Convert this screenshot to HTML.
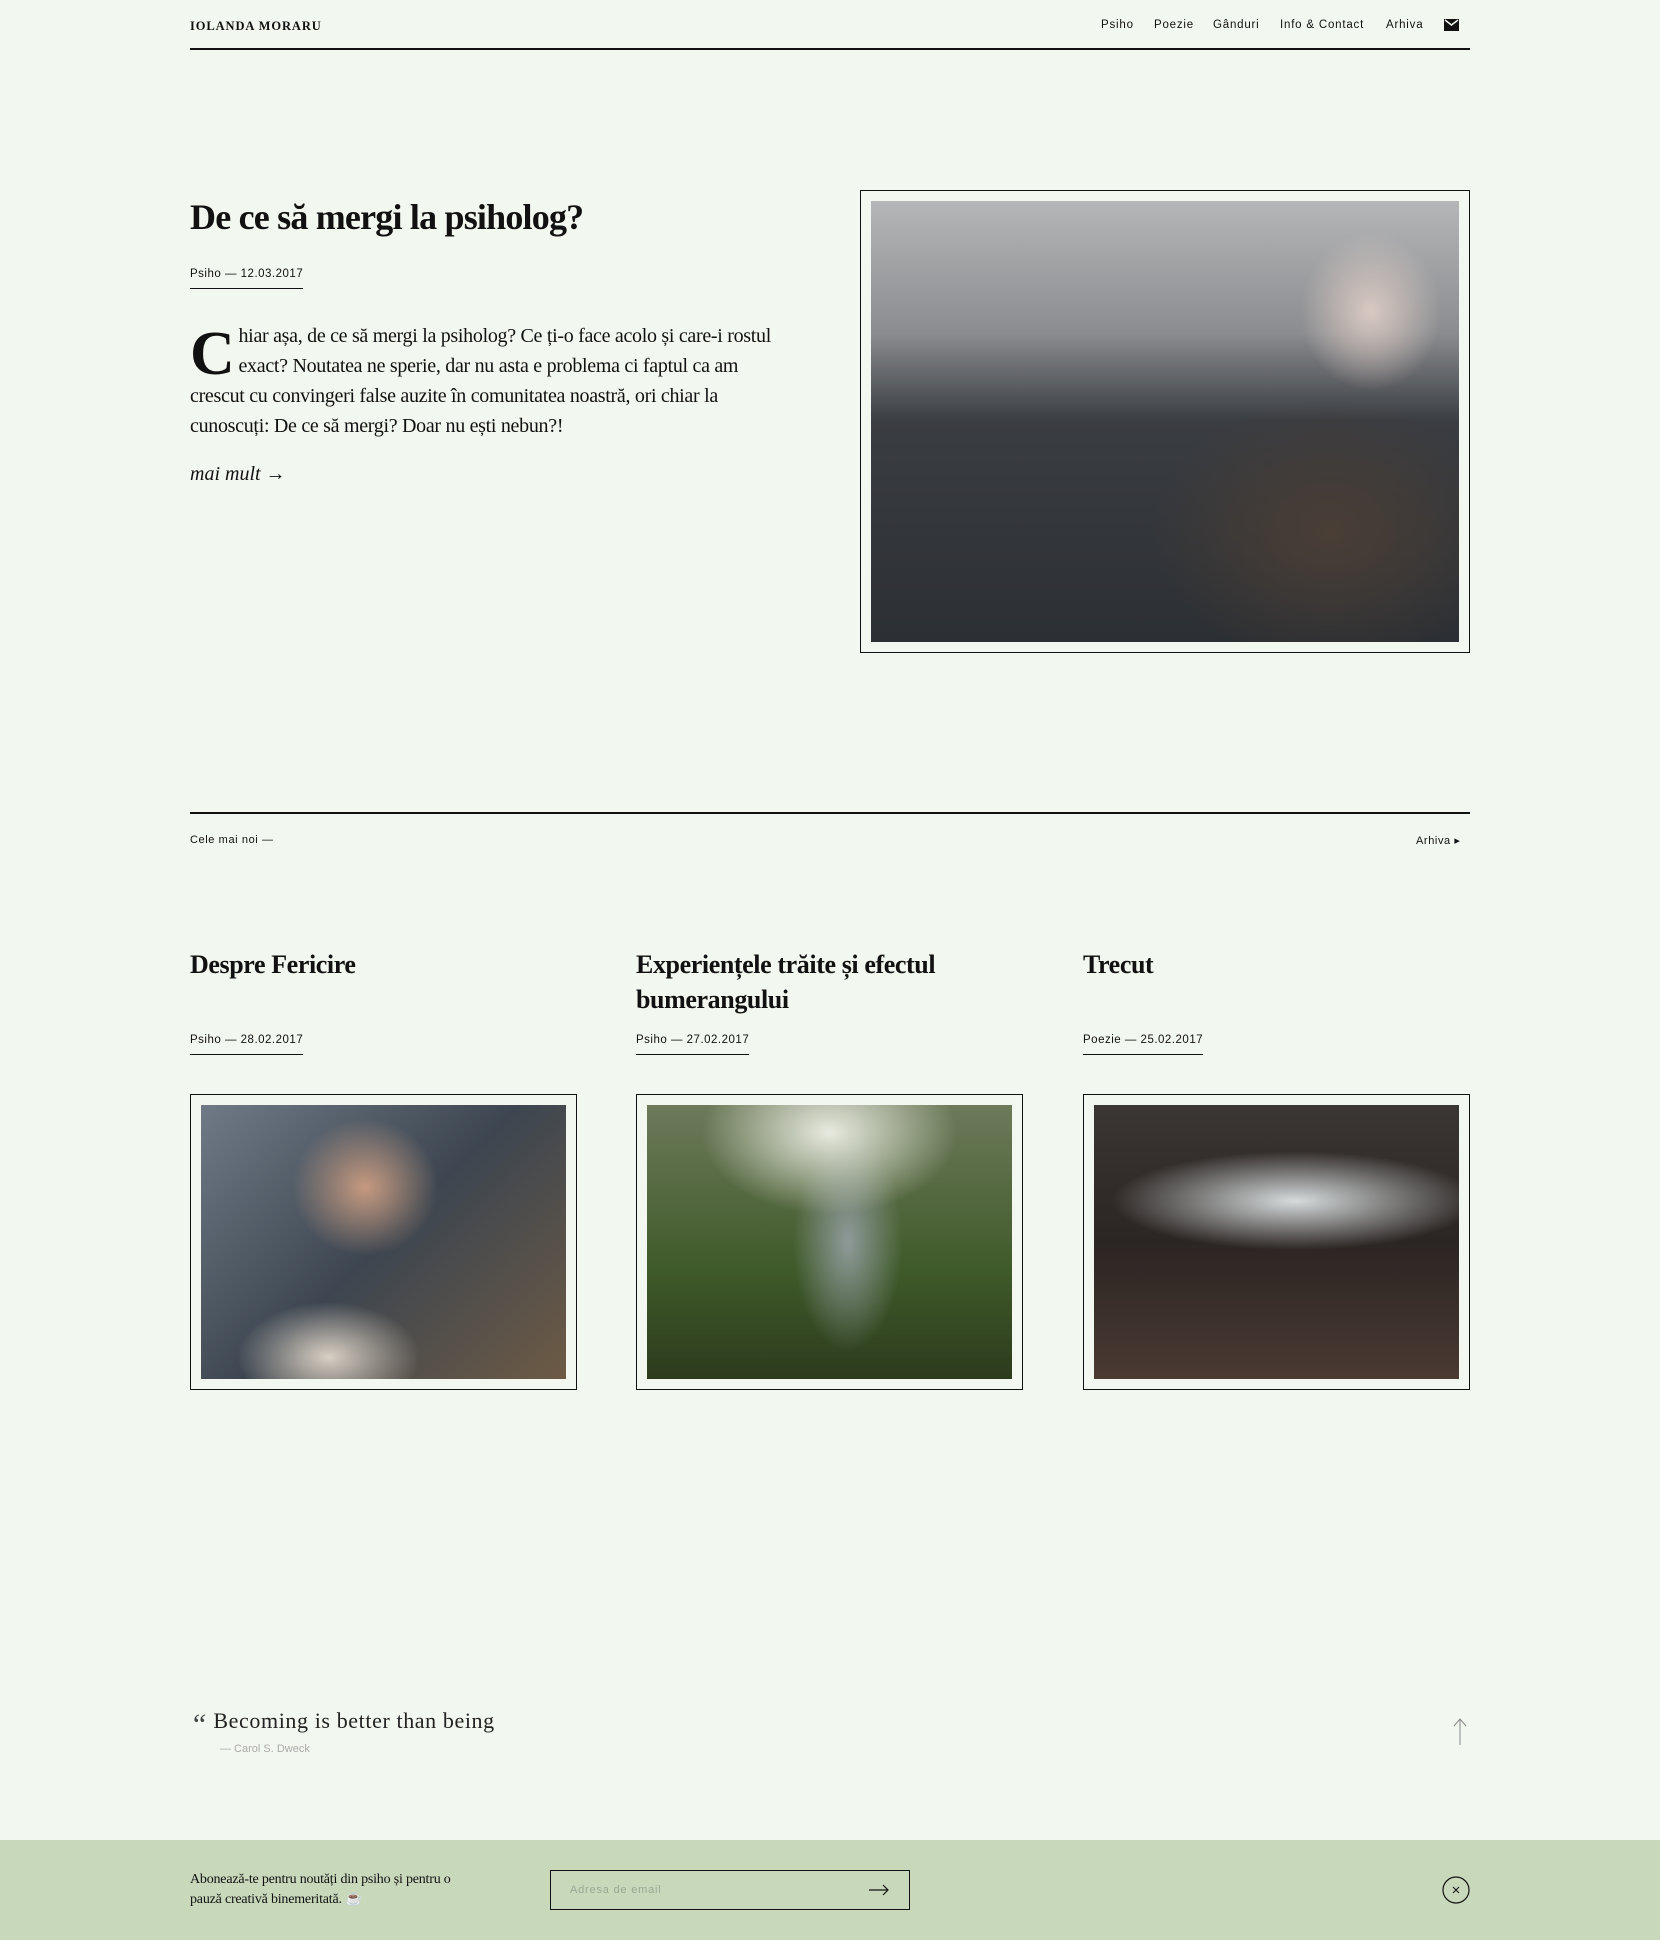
<!DOCTYPE html>
<html><head><meta charset="utf-8"><style>
*{margin:0;padding:0;box-sizing:border-box}
body{width:1660px;height:1940px;background:#f2f7ef;font-family:"Liberation Serif",serif;color:#111;position:relative;overflow:hidden}
.abs{position:absolute}
.sans{font-family:"Liberation Sans",sans-serif}
.nav{top:19px;font-size:11.5px;letter-spacing:.8px}
.meta{font-family:"Liberation Sans",sans-serif;font-size:11.5px;letter-spacing:.5px;padding-bottom:8px;border-bottom:1.5px solid #111;white-space:nowrap}
.frame{border:1.5px solid #111;padding:12px}
.frame div{width:100%;height:100%}
.ct{font-size:26px;font-weight:bold;line-height:35px;letter-spacing:-.4px}
</style></head><body>
<div class="abs" style="left:190px;top:19px;font-size:12.5px;font-weight:bold;letter-spacing:.9px">IOLANDA MORARU</div>
<div class="abs sans nav" style="left:1101px">Psiho</div>
<div class="abs sans nav" style="left:1154px">Poezie</div>
<div class="abs sans nav" style="left:1213px">Gânduri</div>
<div class="abs sans nav" style="left:1280px">Info &amp; Contact</div>
<div class="abs sans nav" style="left:1386px">Arhiva</div>
<svg class="abs" style="left:1444px;top:19px" width="15" height="12" viewBox="0 0 15 12"><rect x="0" y="0" width="15" height="12" fill="#111"/><path d="M1 1 L7.5 6 L14 1" stroke="#f2f7ef" stroke-width="1.5" fill="none"/></svg>
<div class="abs" style="left:190px;top:48px;width:1280px;height:1.5px;background:#111"></div>

<div class="abs" style="left:190px;top:196px;font-size:36px;font-weight:bold;letter-spacing:-.8px">De ce să mergi la psiholog?</div>
<div class="abs meta" style="left:190px;top:268px">Psiho — 12.03.2017</div>
<div class="abs" style="left:190px;top:321px;font-size:20px;line-height:30px;letter-spacing:-.3px;white-space:nowrap">
<span style="float:left;font-size:62px;line-height:50px;font-weight:bold;margin:8px 4px 0 0">C</span>hiar așa, de ce să mergi la psiholog? Ce ți-o face acolo și care-i rostul<br>exact? Noutatea ne sperie, dar nu asta e problema ci faptul ca am<br>crescut cu convingeri false auzite în comunitatea noastră, ori chiar la<br>cunoscuți: De ce să mergi? Doar nu ești nebun?!</div>
<div class="abs" style="left:190px;top:463px;font-size:20px;font-style:italic">mai mult →</div>

<div class="abs frame" style="left:860px;top:190px;width:610px;height:463px;padding:10px"><div style="background:radial-gradient(ellipse 12% 18% at 85% 25%,#d9c9c2,transparent),radial-gradient(ellipse 30% 30% at 78% 75%,#4a3e35,transparent),linear-gradient(180deg,#b5b6b8 0%,#8a8c8f 30%,#3a3d42 50%,#2c2f33 100%)"></div></div>

<div class="abs" style="left:190px;top:812px;width:1280px;height:1.5px;background:#111"></div>
<div class="abs sans" style="left:190px;top:834px;font-size:11px;letter-spacing:.6px">Cele mai noi —</div>
<div class="abs sans" style="left:1416px;top:834px;font-size:11px;letter-spacing:.6px">Arhiva ▸</div>

<div class="abs ct" style="left:190px;top:947px">Despre Fericire</div>
<div class="abs ct" style="left:636px;top:947px">Experiențele trăite și efectul<br>bumerangului</div>
<div class="abs ct" style="left:1083px;top:947px">Trecut</div>
<div class="abs meta" style="left:190px;top:1034px">Psiho — 28.02.2017</div>
<div class="abs meta" style="left:636px;top:1034px">Psiho — 27.02.2017</div>
<div class="abs meta" style="left:1083px;top:1034px">Poezie — 25.02.2017</div>

<div class="abs frame" style="left:190px;top:1094px;width:387px;height:296px;padding:10px"><div style="background:radial-gradient(ellipse 20% 25% at 45% 30%,#c69a80,transparent),radial-gradient(ellipse 25% 20% at 35% 92%,#d8cfc3,transparent),linear-gradient(135deg,#6f7a86,#3d4650 50%,#6d5a45)"></div></div>
<div class="abs frame" style="left:636px;top:1094px;width:387px;height:296px;padding:10px"><div style="background:radial-gradient(ellipse 35% 30% at 50% 10%,#e8eadf,transparent),radial-gradient(ellipse 15% 40% at 55% 50%,#8e9a9a,transparent),linear-gradient(180deg,#6d7a5a,#3f5a2a 60%,#2c3b1c)"></div></div>
<div class="abs frame" style="left:1083px;top:1094px;width:387px;height:296px;padding:10px"><div style="background:radial-gradient(ellipse 50% 18% at 55% 35%,#d6dbdc,transparent),linear-gradient(180deg,#3a3634,#2b2523 50%,#4a3a32)"></div></div>

<div class="abs" style="left:190px;top:1708px;font-size:22px;letter-spacing:.6px;color:#222"><span style="font-style:italic;color:#444;font-size:30px;line-height:20px;vertical-align:-6px">“</span> Becoming is better than being</div>
<div class="abs sans" style="left:220px;top:1743px;font-size:11px;color:#aaa">— Carol S. Dweck</div>
<svg class="abs" style="left:1452px;top:1718px" width="16" height="28" viewBox="0 0 16 28"><path d="M8 1 V27 M2 8 L8 1 L14 8" stroke="#888" stroke-width="1" fill="none"/></svg>

<div class="abs" style="left:0;top:1840px;width:1660px;height:100px;background:#c8d8bb"></div>
<div class="abs" style="left:190px;top:1870px;font-size:14px;line-height:20px;letter-spacing:-.2px">Abonează-te pentru noutăți din psiho și pentru o<br>pauză creativă binemeritată. ☕</div>
<div class="abs" style="left:550px;top:1870px;width:360px;height:40px;border:1.5px solid #111"></div>
<div class="abs sans" style="left:570px;top:1884px;font-size:11px;letter-spacing:.8px;color:#9aa893">Adresa de email</div>
<svg class="abs" style="left:868px;top:1883px" width="22" height="14" viewBox="0 0 22 14"><path d="M1 7 H20 M15 2 L20 7 L15 12" stroke="#111" stroke-width="1.2" fill="none"/></svg>
<svg class="abs" style="left:1442px;top:1876px" width="28" height="28" viewBox="0 0 28 28"><circle cx="14" cy="14" r="13" stroke="#111" stroke-width="1.2" fill="none"/><path d="M11 11 L17 17 M17 11 L11 17" stroke="#111" stroke-width="1"/></svg>
</body></html>
